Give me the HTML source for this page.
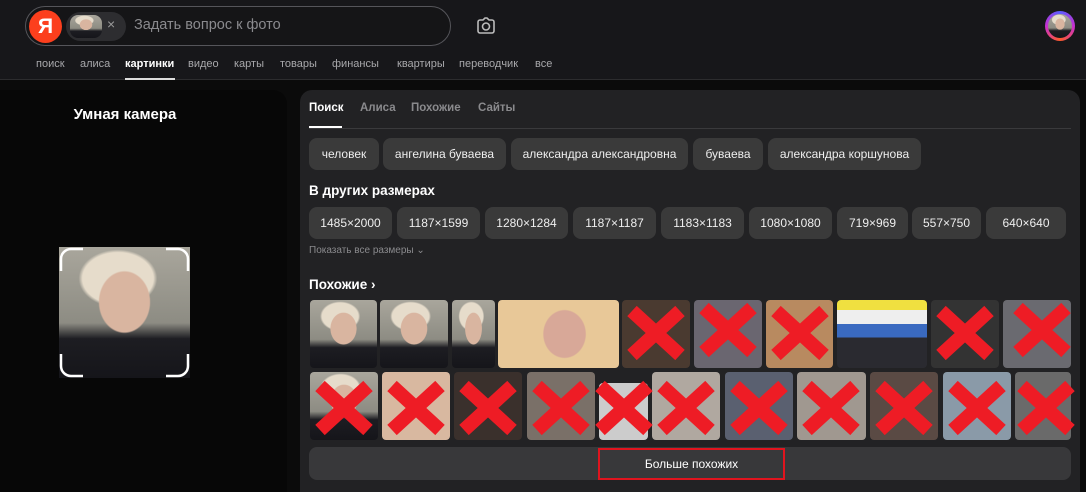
<!DOCTYPE html>
<html><head><meta charset="utf-8"><style>
*{margin:0;padding:0;box-sizing:border-box}
body{width:1086px;height:492px;background:#0b0b0b;font-family:"Liberation Sans","Noto Sans CJK SC",sans-serif;position:relative;overflow:hidden;color:#fff}
.a{position:absolute}
.hdr{left:0;top:0;width:1086px;height:80px;background:#17171a;border-bottom:1px solid #2c2c2e}
.nav{top:58px;font-size:11px;color:#a8a8ab}
.chip{position:absolute;height:32px;background:#3a3a3a;border-radius:8px;font-size:12px;color:#eee;line-height:32px;text-align:center}
.im{position:absolute;border-radius:4px;overflow:hidden}
.f{background:radial-gradient(ellipse 20% 24% at 50% 42%,#d9b5a0 95%,transparent 100%),radial-gradient(ellipse 30% 22% at 45% 24%,#e6dccb 90%,transparent 100%),linear-gradient(#a9a69c 0%,#8d8c83 58%,#1d1d22 70%,#15151a 100%)}
</style></head><body>
<div class="a hdr"></div>
<div class="a" style="left:25px;top:6px;width:426px;height:40px;border:1.5px solid #55555a;border-radius:20px;background:#151517"></div>
<div class="a" style="left:29px;top:10px;width:33px;height:33px;border-radius:50%;background:#fc3f1d;color:#fff;font-weight:bold;font-size:21px;text-align:center;line-height:33px">Я</div>
<div class="a" style="left:66px;top:12px;width:60px;height:29px;border-radius:15px;background:#2d2d30"></div>
<div class="a f" style="left:70px;top:15px;width:32px;height:23px;border-radius:8px"></div>
<div class="a" style="left:107px;top:16px;font-size:14px;color:#999">×</div>
<div class="a" style="left:134px;top:17px;font-size:14.5px;color:#8a8a8e">Задать вопрос к фото</div>
<svg class="a" style="left:475px;top:15px" width="22" height="22" viewBox="0 0 22 22" fill="none" stroke="#bbb" stroke-width="1.6"><path d="M5 5h3l2-2h2l2 2h3a2 2 0 0 1 2 2v9a2 2 0 0 1-2 2H5a2 2 0 0 1-2-2V7a2 2 0 0 1 2-2z"/><circle cx="11" cy="11.5" r="3.5"/></svg>
<div class="a" style="left:1045px;top:11px;width:30px;height:30px;border-radius:50%;background:conic-gradient(#5b5cff,#c82fd0,#ff5a2a,#c82fd0,#5b5cff);"></div>
<div class="a f" style="left:1048px;top:14px;width:24px;height:24px;border-radius:50%"></div>
<div class="a nav" style="left:36px">поиск</div>
<div class="a nav" style="left:80px">алиса</div>
<div class="a nav" style="left:125px;color:#fff;font-weight:bold">картинки</div>
<div class="a" style="left:125px;top:78px;width:50px;height:2px;background:#ddd"></div>
<div class="a nav" style="left:188px">видео</div>
<div class="a nav" style="left:234px">карты</div>
<div class="a nav" style="left:280px">товары</div>
<div class="a nav" style="left:332px">финансы</div>
<div class="a nav" style="left:397px">квартиры</div>
<div class="a nav" style="left:459px">переводчик</div>
<div class="a nav" style="left:535px">все</div>
<div class="a" style="left:0;top:90px;width:287px;height:402px;background:#070707;border-radius:0 14px 0 0"></div>
<div class="a" style="left:0;top:106px;width:250px;text-align:center;font-size:15px;font-weight:bold">Умная камера</div>
<div class="a f" style="left:59px;top:247px;width:131px;height:131px"></div>
<svg class="a" style="left:59px;top:247px" width="131" height="131" fill="none" stroke="#fff" stroke-width="2.5"><path d="M2 24V12A10 10 0 0 1 12 2h12M107 2h12a10 10 0 0 1 10 10v12M129 107v12a10 10 0 0 1-10 10h-12M24 129H12A10 10 0 0 1 2 119v-12"/></svg>
<div class="a" style="left:300px;top:90px;width:780px;height:402px;background:#222224;border-radius:12px 12px 0 0"></div>
<div class="a" style="left:309px;top:102px;font-size:11.5px;font-weight:bold">Поиск</div>
<div class="a" style="left:360px;top:102px;font-size:11.5px;font-weight:bold;color:#8a8a8d">Алиса</div>
<div class="a" style="left:411px;top:102px;font-size:11.5px;font-weight:bold;color:#8a8a8d">Похожие</div>
<div class="a" style="left:478px;top:102px;font-size:11.5px;font-weight:bold;color:#8a8a8d">Сайты</div>
<div class="a" style="left:309px;top:128px;width:762px;height:1px;background:#3a3a3c"></div>
<div class="a" style="left:309px;top:126px;width:33px;height:2px;background:#fff"></div>
<div class="chip" style="left:309px;top:138px;width:70px">человек</div>
<div class="chip" style="left:383px;top:138px;width:123px">ангелина буваева</div>
<div class="chip" style="left:511px;top:138px;width:177px">александра александровна</div>
<div class="chip" style="left:693px;top:138px;width:70px">буваева</div>
<div class="chip" style="left:768px;top:138px;width:153px">александра коршунова</div>
<div class="a" style="left:309px;top:183px;font-size:13.5px;font-weight:bold">В других размерах</div>
<div class="chip" style="left:309px;top:207px;width:83px">1485×2000</div>
<div class="chip" style="left:397px;top:207px;width:83px">1187×1599</div>
<div class="chip" style="left:485px;top:207px;width:83px">1280×1284</div>
<div class="chip" style="left:573px;top:207px;width:83px">1187×1187</div>
<div class="chip" style="left:661px;top:207px;width:83px">1183×1183</div>
<div class="chip" style="left:749px;top:207px;width:83px">1080×1080</div>
<div class="chip" style="left:837px;top:207px;width:71px">719×969</div>
<div class="chip" style="left:912px;top:207px;width:69px">557×750</div>
<div class="chip" style="left:986px;top:207px;width:80px">640×640</div>
<div class="a" style="left:309px;top:245px;font-size:10px;color:#8a8a8d">Показать все размеры ⌄</div>
<div class="a" style="left:309px;top:277px;font-size:13.5px;font-weight:bold">Похожие ›</div>
<div class="im f" style="left:310px;top:300px;width:67px;height:68px"></div>
<div class="im f" style="left:380px;top:300px;width:68px;height:68px"></div>
<div class="im f" style="left:452px;top:300px;width:43px;height:68px"></div>
<div class="im f" style="left:498px;top:300px;width:121px;height:68px;background:radial-gradient(ellipse 18% 36% at 55% 50%,#d8a898 95%,transparent 100%),#e8c898"></div>
<div class="im f" style="left:622px;top:300px;width:68px;height:68px;background:#4a3a30"></div>
<div class="im f" style="left:694px;top:300px;width:68px;height:68px;background:#6a6670"></div>
<div class="im f" style="left:766px;top:300px;width:67px;height:68px;background:#b88a60"></div>
<div class="im f" style="left:837px;top:300px;width:90px;height:68px;background:linear-gradient(#f0e040 0 15%,#eee 15% 35%,#3a6ac0 35% 55%,#2a2a30 55%)"></div>
<div class="im f" style="left:931px;top:300px;width:68px;height:68px;background:#333"></div>
<div class="im f" style="left:1003px;top:300px;width:68px;height:68px;background:#6a6a70"></div>
<div class="im f" style="left:310px;top:372px;width:68px;height:68px"></div>
<div class="im f" style="left:382px;top:372px;width:68px;height:68px;background:#d8b8a0"></div>
<div class="im f" style="left:454px;top:372px;width:68px;height:68px;background:#3a302c"></div>
<div class="im f" style="left:527px;top:372px;width:68px;height:68px;background:#7a7068"></div>
<div class="im f" style="left:599px;top:383px;width:49px;height:57px;background:#ccc"></div>
<div class="im f" style="left:652px;top:372px;width:68px;height:68px;background:#b0a8a0"></div>
<div class="im f" style="left:725px;top:372px;width:68px;height:68px;background:#5a6070"></div>
<div class="im f" style="left:797px;top:372px;width:69px;height:68px;background:#a09890"></div>
<div class="im f" style="left:870px;top:372px;width:68px;height:68px;background:#5a4a44"></div>
<div class="im f" style="left:943px;top:372px;width:68px;height:68px;background:#8a9aa8"></div>
<div class="im f" style="left:1015px;top:372px;width:56px;height:68px;background:#6a6a6a"></div>
<svg class="a" style="left:0;top:0" width="1086" height="492">
<defs><g id="X"><path d="M-24-22L24 22M24-22L-24 22" stroke="#ee1c25" stroke-width="14"/></g></defs>
<use href="#X" x="656" y="333"/><use href="#X" x="728" y="330"/><use href="#X" x="800" y="333"/><use href="#X" x="965" y="333"/><use href="#X" x="1042" y="330"/>
<use href="#X" x="344" y="408"/><use href="#X" x="416" y="408"/><use href="#X" x="488" y="408"/><use href="#X" x="561" y="408"/><use href="#X" x="624" y="408"/><use href="#X" x="686" y="408"/><use href="#X" x="759" y="408"/><use href="#X" x="831" y="408"/><use href="#X" x="904" y="408"/><use href="#X" x="977" y="408"/><use href="#X" x="1046" y="408"/>
</svg>
<div class="a" style="left:309px;top:447px;width:762px;height:33px;background:#38383a;border-radius:8px"></div>
<div class="a" style="left:598px;top:448px;width:187px;height:32px;border:2px solid #e0141e;font-size:12px;text-align:center;line-height:28px">Больше похожих</div>
</body></html>
